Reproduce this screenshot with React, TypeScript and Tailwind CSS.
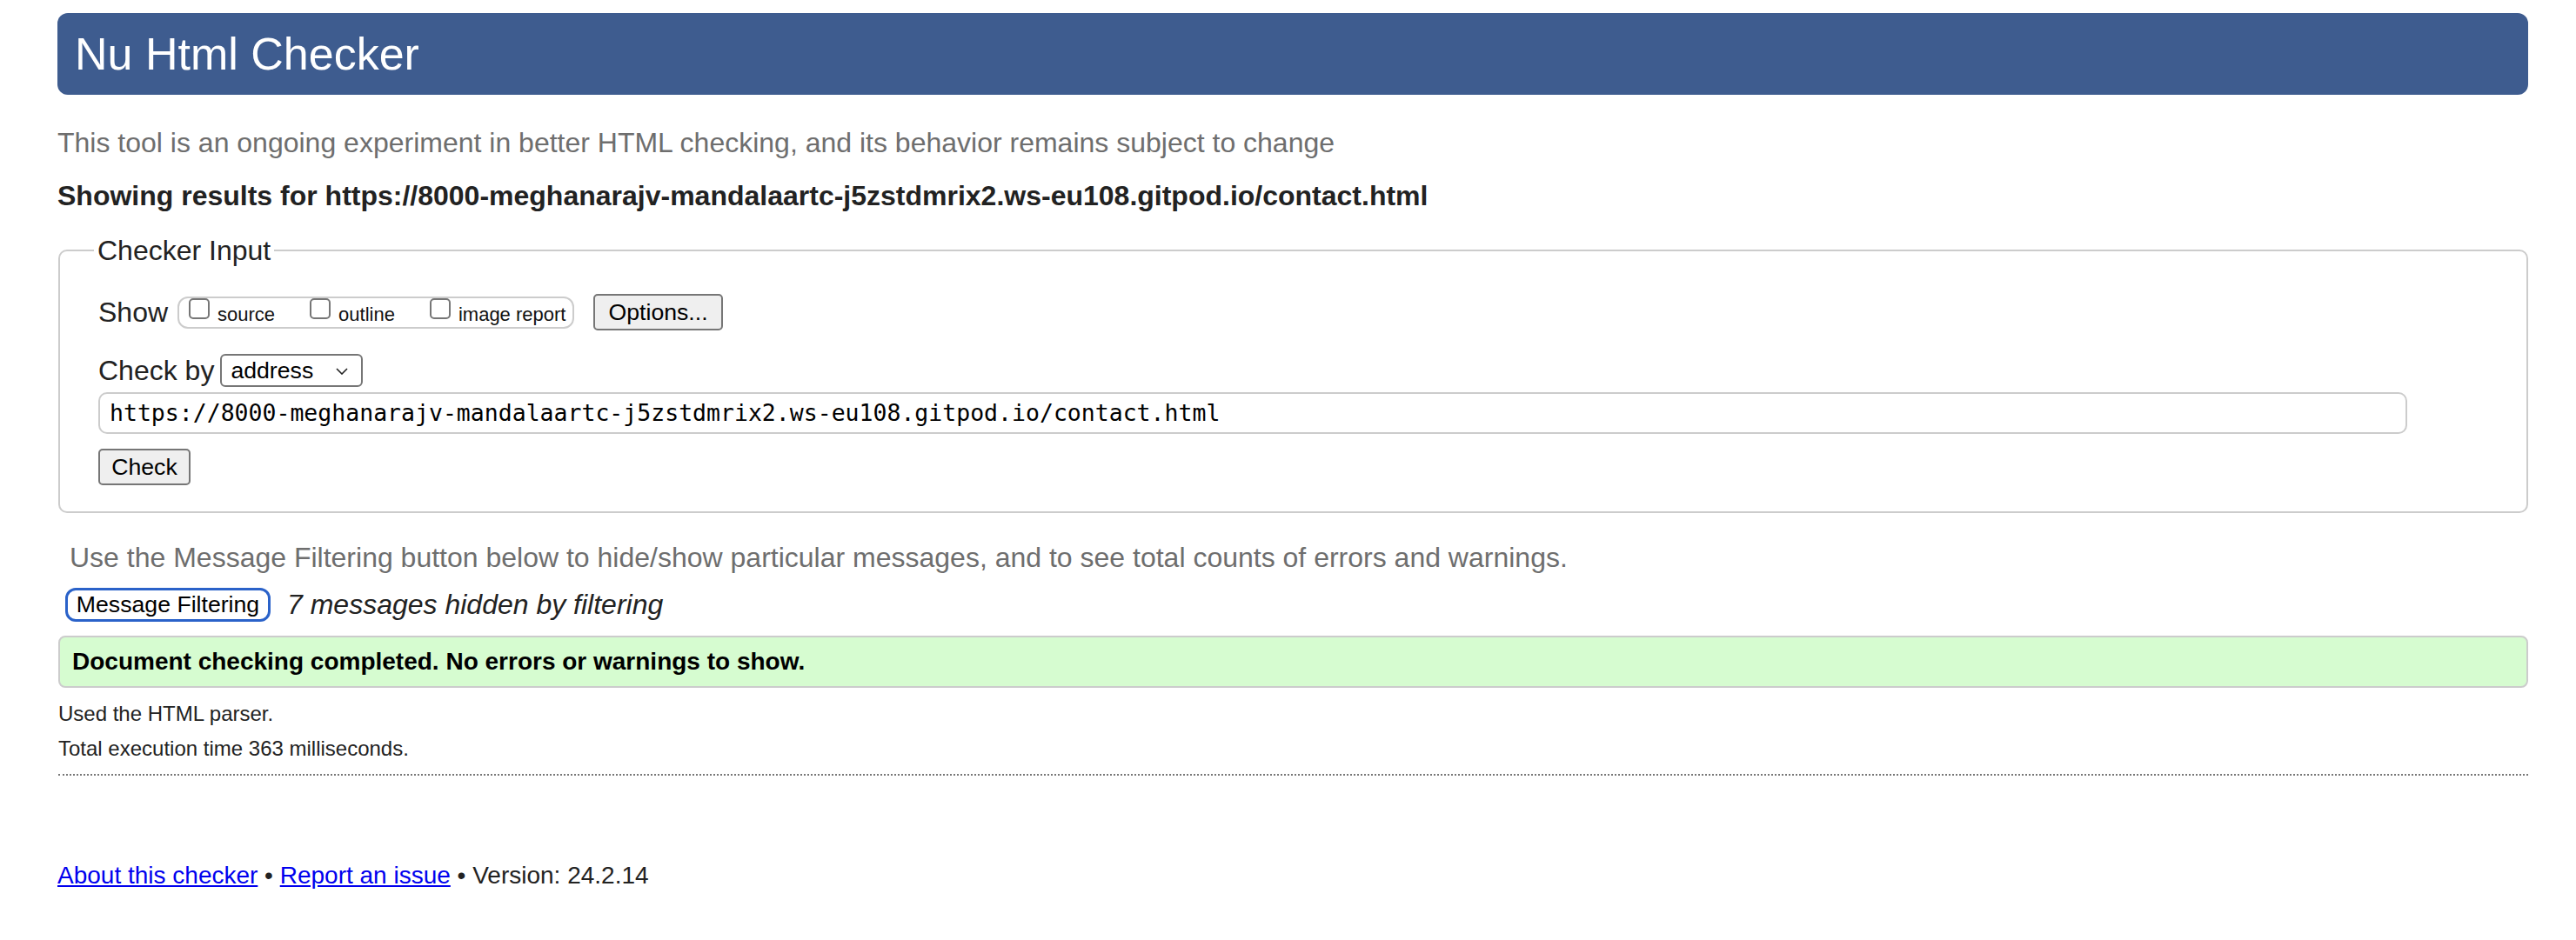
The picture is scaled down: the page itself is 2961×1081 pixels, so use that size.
import React from "react";

function Box() {
  return <span className="block w-[24px] h-[24px] border-2 border-[#767676] rounded-[5px] bg-white shrink-0" />;
}

function Opt({ label }: { label: string }) {
  return (
    <span className="flex items-start">
      <Box />
      <span className="ml-[9px] mt-[6px] text-[22px] leading-[26px] text-[#111]">{label}</span>
    </span>
  );
}

export default function App() {
  return (
    <div className="min-h-[1081px] bg-white pl-[66px] pr-[55px] pt-[15px] text-[#222]" style={{ fontFamily: '"Liberation Sans", Arial, sans-serif' }}>
      <div className="h-[94px] rounded-[12px] bg-[#3e5c8f] flex items-center pl-[20px]">
        <h1 className="text-white text-[52px] leading-[60px] font-normal">Nu Html Checker</h1>
      </div>

      <p className="mt-[35px] text-[32px] leading-[40px] text-[#6e6e6e]">
        This tool is an ongoing experiment in better HTML checking, and its behavior remains subject to change
      </p>

      <p className="mt-[21px] text-[32px] leading-[40px] font-bold text-[#222]">
        Showing results for https://8000-meghanarajv-mandalaartc-j5zstdmrix2.ws-eu108.gitpod.io/contact.html
      </p>

      <fieldset className="mt-[23px] ml-[1px] border-2 border-[#cccccc] rounded-[10px] pl-[44px] pr-[137px] pb-[30px]">
        <legend className="ml-[-5px] px-[4px] text-[32px] leading-[40px] text-[#222]">Checker Input</legend>

        <div className="mt-[30px] flex items-center h-[42px]">
          <span className="text-[32px] leading-[40px] text-[#222]">Show</span>
          <div className="ml-[11px] h-[37px] w-[456px] border-2 border-[#cccccc] rounded-[12px] flex items-start pl-[11px] gap-[40px]">
            <Opt label="source" />
            <Opt label="outline" />
            <Opt label="image report" />
          </div>
          <button className="ml-[22px] w-[149px] h-[42px] bg-[#efefef] border-2 border-[#767676] rounded-[5px] text-[26.67px] leading-[30px] text-black">
            Options...
          </button>
        </div>

        <div className="mt-[26px] flex items-center h-[40px]">
          <span className="text-[32px] leading-[40px] text-[#222]">Check by</span>
          <div className="ml-[7px] w-[164px] h-[38px] border-2 border-[#767676] rounded-[6px] bg-white flex items-center pl-[10px] pr-[15px] justify-between">
            <span className="text-[26.67px] leading-[30px] text-black">address</span>
            <svg width="14" height="8" viewBox="0 0 14 8" className="mt-[2px]">
              <path d="M1 1 L7 7 L13 1" fill="none" stroke="#222" strokeWidth="1.6" />
            </svg>
          </div>
        </div>

        <div className="mt-[5px] h-[48px] border-2 border-[#cccccc] rounded-[10px] bg-white flex items-center pl-[11px]">
          <span className="text-[26.5px] leading-[32px] text-black" style={{ fontFamily: '"DejaVu Sans Mono", "Liberation Mono", monospace' }}>
            https://8000-meghanarajv-mandalaartc-j5zstdmrix2.ws-eu108.gitpod.io/contact.html
          </span>
        </div>

        <button className="mt-[17px] block w-[106px] h-[42px] bg-[#efefef] border-2 border-[#767676] rounded-[5px] text-[26.67px] leading-[30px] text-black">
          Check
        </button>
      </fieldset>

      <p className="mt-[31px] ml-[14px] text-[32px] leading-[40px] text-[#6e6e6e]">
        Use the Message Filtering button below to hide/show particular messages, and to see total counts of errors and warnings.
      </p>

      <div className="mt-[14px] flex items-center h-[40px]">
        <button className="ml-[9px] w-[236px] h-[39px] bg-white border-[3px] border-[#2a62c9] rounded-[12px] text-[26.67px] leading-[30px] text-black">
          Message Filtering
        </button>
        <span className="ml-[19px] text-[32px] leading-[40px] italic text-[#222]">7 messages hidden by filtering</span>
      </div>

      <div className="mt-[16px] ml-[1px] h-[60px] border-2 border-[#cccccc] rounded-[8px] bg-[#d6fcd0] flex items-center pl-[14px]">
        <span className="text-[28px] leading-[34px] font-bold text-black">Document checking completed. No errors or warnings to show.</span>
      </div>

      <p className="mt-[15px] ml-[1px] text-[24px] leading-[30px] text-[#222]">Used the HTML parser.</p>
      <p className="mt-[10px] ml-[1px] text-[24px] leading-[30px] text-[#222]">Total execution time 363 milliseconds.</p>

      <div className="mt-[14px] ml-[1px] border-t-2 border-dotted border-[#777]" />

      <p className="mt-[98px] text-[28px] leading-[34px] text-[#222]">
        <a href="#" className="text-[#0000ee] underline">About this checker</a>
        {" • "}
        <a href="#" className="text-[#0000ee] underline">Report an issue</a>
        {" • Version: 24.2.14"}
      </p>
    </div>
  );
}
